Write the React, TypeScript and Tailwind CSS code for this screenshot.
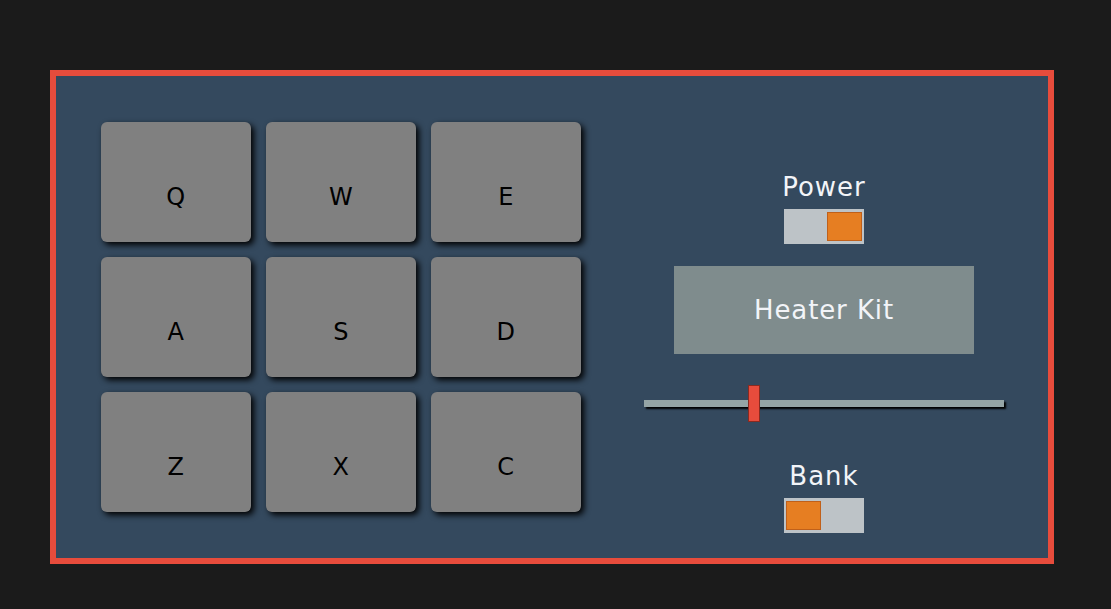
import React from "react";

const pads = ["Q", "W", "E", "A", "S", "D", "Z", "X", "C"];

function Toggle({ on }: { on: boolean }) {
  return (
    <div className={"flex h-[35px] w-[80px] items-center bg-[#bdc3c7] px-[2px] " + (on ? "justify-end" : "justify-start")}>
      <div className="h-[29px] w-[35px] border border-[#c0601a] bg-[#e67e22]" />
    </div>
  );
}

export default function App() {
  return (
    <div
      className="h-[609px] w-[1111px] bg-[#1b1b1b] pl-[50px] pt-[70px]"
      style={{ fontFamily: "'DejaVu Sans', 'Open Sans', sans-serif" }}
    >
      <div className="flex h-[494px] w-[1004px] border-[6px] border-[#e74c3c] bg-[#34495e]">
        <div className="ml-[45px] mt-[46px] grid grid-cols-[150px_150px_150px] gap-x-[15px] gap-y-[15px] self-start">
          {pads.map((p) => (
            <div
              key={p}
              className="flex h-[120px] items-center justify-center rounded-[6px] bg-[#808080] pt-[30px] text-[24px] tracking-[0.5px] text-black shadow-[3px_3px_6px_#000]"
            >
              {p}
            </div>
          ))}
        </div>
        <div className="ml-[63px] mt-[96px] flex w-[360px] flex-col items-center">
          <div className="h-[30px] text-[26px] leading-[30px] tracking-[1px] text-[#f2f4f8]">Power</div>
          <div className="mt-[7px]">
            <Toggle on={true} />
          </div>
          <div className="mt-[22px] flex h-[88px] w-[300px] items-center justify-center bg-[#7f8c8d] text-[26px] tracking-[0.9px] text-[#f2f4f8]">
            Heater Kit
          </div>
          <div className="relative mt-[31px] h-[37px] w-[360px]">
            <div className="absolute left-0 top-[15px] h-[7px] w-[360px] bg-[#95a5a6] shadow-[2px_2px_2px_#000]" />
            <div className="absolute left-[104px] top-0 h-[37px] w-[12px] border border-[#8a2a20] bg-[#e74c3c]" />
          </div>
          <div className="mt-[39px] h-[30px] text-[26px] leading-[30px] tracking-[1px] text-[#f2f4f8]">Bank</div>
          <div className="mt-[7px]">
            <Toggle on={false} />
          </div>
        </div>
      </div>
    </div>
  );
}
